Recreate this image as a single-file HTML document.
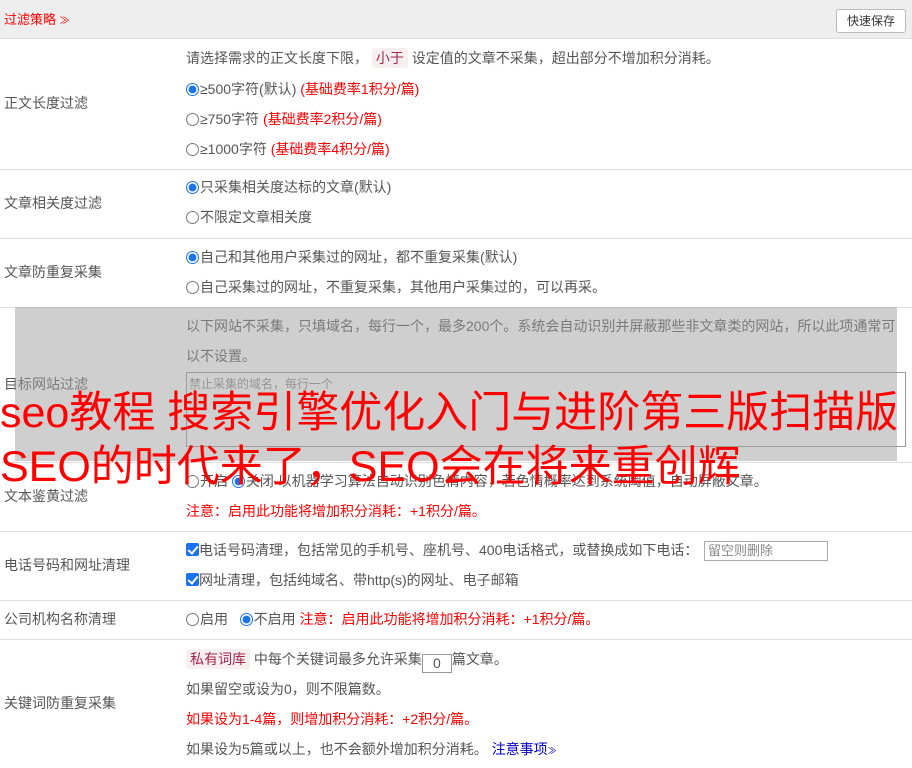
<!DOCTYPE html>
<html><head><meta charset="utf-8"><style>
*{margin:0;padding:0;box-sizing:border-box}
body{width:912px;height:768px;position:relative;overflow:hidden;background:#fff;font-family:"Liberation Sans","Noto Sans CJK SC",sans-serif;font-size:14px;color:#555}
.a{position:absolute;white-space:nowrap;line-height:16px}
.r{color:#f00}
.hl{position:absolute;left:0;width:912px;height:1px;background:#ddd}
.rd{display:inline-block;width:13px;height:13px;border:1px solid #777;border-radius:50%;vertical-align:-2px;margin-right:1px}
.rd.on{border-color:#1a73e8;background:radial-gradient(circle,#1a73e8 45%,#fff 55%)}
.cb{display:inline-block;width:13px;height:13px;background:#1a73e8;border-radius:2px;vertical-align:-1px;position:relative}
.cb:after{content:"";position:absolute;left:4px;top:1px;width:4px;height:8px;border:solid #fff;border-width:0 2px 2px 0;transform:rotate(40deg)}
.tag{background:#f7eef0;color:#a0284b;padding:2px 4px;border-radius:3px}
.big{position:absolute;left:0;color:#f00;font-size:43px;white-space:nowrap;line-height:46px}
</style></head><body>
<div style="position:absolute;left:0;top:0;width:912px;height:39px;background:#eee;border-bottom:1px solid #ddd"></div>
<div class="a" style="left:4px;top:12px;color:#f00;font-size:13px">过滤策略 <span style="font-size:10px">≫</span></div>
<div style="position:absolute;left:836px;top:9px;width:70px;height:24px;border:1px solid #bbb;border-radius:3px;background:#fff;font-size:12px;color:#333;text-align:center;line-height:22px">快速保存</div>

<div class="hl" style="top:169px"></div><div class="hl" style="top:238px"></div><div class="hl" style="top:307px"></div><div class="hl" style="top:462px"></div><div class="hl" style="top:531px"></div><div class="hl" style="top:600px"></div><div class="hl" style="top:639px"></div>

<div class="a" style="left:4px;top:95px">正文长度过滤</div>
<div class="a" style="left:186px;top:50px">请选择需求的正文长度下限， <span class="tag">小于</span> 设定值的文章不采集，超出部分不增加积分消耗。</div>
<div class="a" style="left:186px;top:81px"><span class="rd on"></span>≥500字符(默认) <span class="r">(基础费率1积分/篇)</span></div>
<div class="a" style="left:186px;top:111px"><span class="rd"></span>≥750字符 <span class="r">(基础费率2积分/篇)</span></div>
<div class="a" style="left:186px;top:141px"><span class="rd"></span>≥1000字符 <span class="r">(基础费率4积分/篇)</span></div>

<div class="a" style="left:4px;top:195px">文章相关度过滤</div>
<div class="a" style="left:186px;top:179px"><span class="rd on"></span>只采集相关度达标的文章(默认)</div>
<div class="a" style="left:186px;top:209px"><span class="rd"></span>不限定文章相关度</div>

<div class="a" style="left:4px;top:264px">文章防重复采集</div>
<div class="a" style="left:186px;top:249px"><span class="rd on"></span>自己和其他用户采集过的网址，都不重复采集(默认)</div>
<div class="a" style="left:186px;top:279px"><span class="rd"></span>自己采集过的网址，不重复采集，其他用户采集过的，可以再采。</div>

<div class="a" style="left:4px;top:376px">目标网站过滤</div>
<div class="a" style="left:186px;top:318px">以下网站不采集，只填域名，每行一个，最多200个。系统会自动识别并屏蔽那些非文章类的网站，所以此项通常可</div>
<div class="a" style="left:186px;top:348px">以不设置。</div>
<div style="position:absolute;left:186px;top:372px;width:720px;height:75px;border:1px solid #999;background:#fff;font-size:12px;color:#888;padding:2px">禁止采集的域名，每行一个</div>

<div class="a" style="left:4px;top:488px">文本鉴黄过滤</div>
<div class="a" style="left:186px;top:473px"><span class="rd"></span>开启 <span class="rd on"></span>关闭 以机器学习算法自动识别色情内容，若色情概率达到系统阈值，自动屏蔽文章。</div>
<div class="a r" style="left:186px;top:503px">注意：启用此功能将增加积分消耗：+1积分/篇。</div>

<div class="a" style="left:4px;top:557px">电话号码和网址清理</div>
<div class="a" style="left:186px;top:542px"><span class="cb"></span>电话号码清理，包括常见的手机号、座机号、400电话格式，或替换成如下电话：</div>
<div style="position:absolute;left:704px;top:541px;width:124px;height:20px;border:1px solid #aaa;color:#888;padding-left:3px;line-height:18px;font-size:13px">留空则删除</div>
<div class="a" style="left:186px;top:572px"><span class="cb"></span>网址清理，包括纯域名、带http(s)的网址、电子邮箱</div>

<div class="a" style="left:4px;top:611px">公司机构名称清理</div>
<div class="a" style="left:186px;top:611px"><span class="rd"></span>启用 &nbsp; <span class="rd on"></span>不启用 <span class="r">注意：启用此功能将增加积分消耗：+1积分/篇。</span></div>

<div class="a" style="left:4px;top:695px">关键词防重复采集</div>
<div class="a" style="left:186px;top:651px"><span class="tag">私有词库</span> 中每个关键词最多允许采集<span style="display:inline-block;width:30px;height:19px;border:1px solid #999;text-align:center;vertical-align:-4px">0</span>篇文章。</div>
<div class="a" style="left:186px;top:681px">如果留空或设为0，则不限篇数。</div>
<div class="a r" style="left:186px;top:711px">如果设为1-4篇，则增加积分消耗：+2积分/篇。</div>
<div class="a" style="left:186px;top:741px">如果设为5篇或以上，也不会额外增加积分消耗。 <span style="color:#00c">注意事项</span><span style="color:#00c;font-size:9px">≫</span></div>

<div style="position:absolute;left:15px;top:307px;width:882px;height:154px;background:rgba(160,160,160,0.5)"></div>
<div class="big" style="top:390px">seo教程 搜索引擎优化入门与进阶第三版扫描版</div>
<div class="big" style="top:444px">SEO的时代来了，SEO会在将来重创辉</div>
</body></html>
